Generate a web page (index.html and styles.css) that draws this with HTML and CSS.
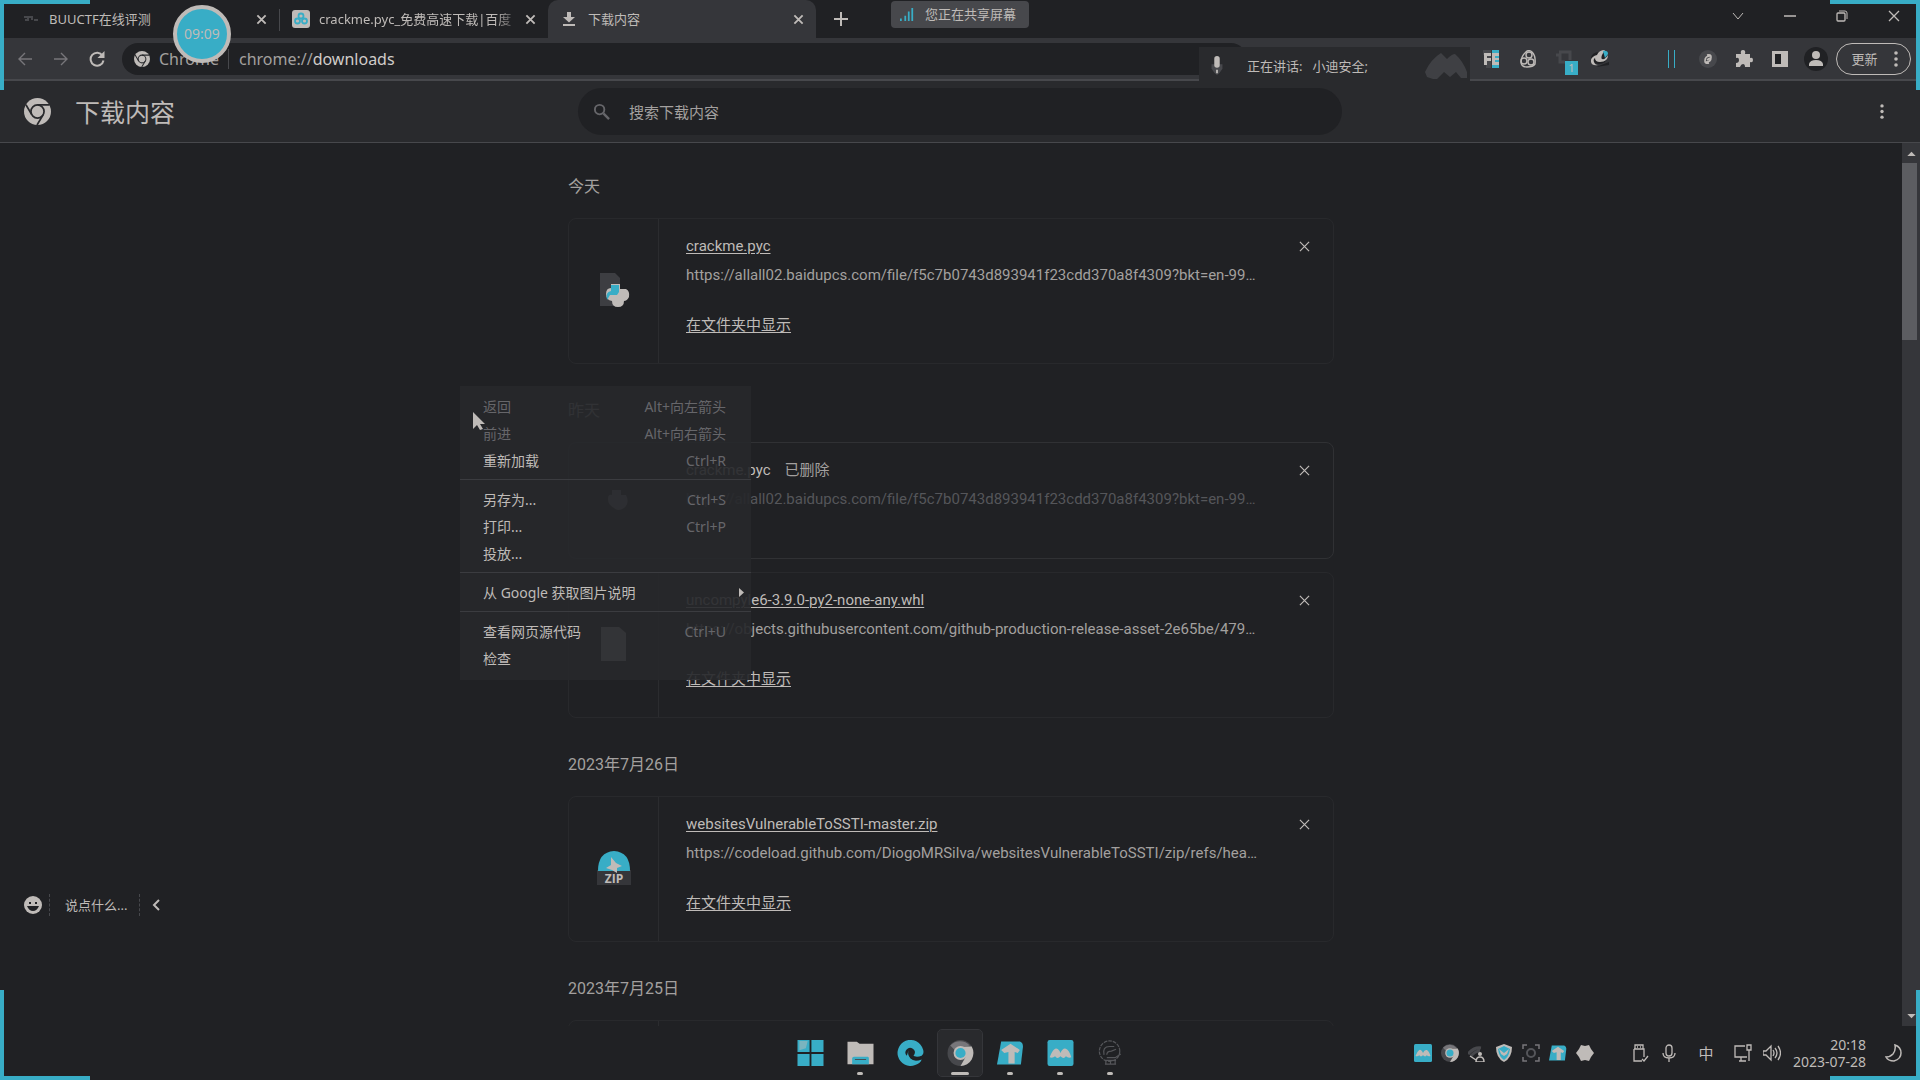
FILE: index.html
```html
<!DOCTYPE html>
<html lang="zh-CN">
<head>
<meta charset="utf-8">
<title>下载内容</title>
<link rel="stylesheet" href="styles.css">
</head>
<body>
<svg class="defs" aria-hidden="true">
  <symbol id="x" viewBox="0 0 12 12"><path d="M1.500 1.500l9 9M10.500 1.500l-9 9" fill="none" stroke="currentColor" stroke-width="2"/></symbol>
  <symbol id="x-thin" viewBox="0 0 12 12"><path d="M1 1l10 10M11 1L1 11" fill="none" stroke="currentColor" stroke-width="1.300"/></symbol>
  <symbol id="chrome" viewBox="0 0 28 28"><circle cx="14" cy="14" r="14" fill="currentColor"/><circle cx="14" cy="14" r="6.800" fill="none" stroke="#292a2d" stroke-width="1.800"/><path d="M14 7.200h12.500M8.200 17.500L2 7M19.800 17.500L13.500 28" stroke="#292a2d" stroke-width="1.800" fill="none"/></symbol>
  <symbol id="chrome-color" viewBox="0 0 28 28"><circle cx="14" cy="14" r="14" fill="#47484c"/><path d="M14 7h12a14 14 0 0 1-12 21l6-10.500z" fill="#bfbbb8"/><path d="M3 6a14 14 0 0 1 21 0l-10 2-6 3z" fill="#77767a"/><circle cx="14" cy="14" r="7.500" fill="#bfbbb8"/><circle cx="14" cy="14" r="5.500" fill="#38adc6"/></symbol>
  <symbol id="peaks" viewBox="0 0 24 24"><rect width="24" height="24" rx="2" fill="#38adc6"/><path d="M2 16q2-6 5-8 2-1 4 2l1 2q2-5 5-4 3 1 5 8-3 1-5-1-2 3-5 0-3 3-5 0-2 2-5 1z" fill="#bfbbb8"/></symbol>
  <symbol id="arrow-app" viewBox="0 0 26 24"><path d="M4 1h18q3 1 3 5l-2 17H0z" fill="#38adc6"/><path d="M4 9l9-6 9 6-2 3-3-1v11h-6V11l-4 1z" fill="#bfbbb8"/></symbol>
  <symbol id="dots" viewBox="0 0 4 16"><circle cx="2" cy="2" r="1.800" fill="currentColor"/><circle cx="2" cy="8" r="1.800" fill="currentColor"/><circle cx="2" cy="14" r="1.800" fill="currentColor"/></symbol>
  <symbol id="download" viewBox="0 0 12 14"><path d="M4 0h4v5h4L6 10.500 0 5h4zM0 12h12v2H0z" fill="currentColor"/></symbol>
</svg>

<div class="tabs" role="tablist">
  <div class="tab tab-first" role="tab">
    <svg class="fav" viewBox="0 0 18 18"><path d="M2 7h4v3H3M7 7h3v3M12 10h4" stroke="#47484c" stroke-width="2" fill="none"/></svg>
    <span class="tab-title">BUUCTF在线评测</span>
    <button class="tab-close" aria-label="关闭"><svg><use href="#x"/></svg></button>
  </div>
  <div class="tab tab-second" role="tab">
    <svg class="fav" viewBox="0 0 18 18"><rect width="18" height="18" rx="3" fill="#bfbbb8"/><g fill="none" stroke="#38adc6" stroke-width="1.800"><circle cx="9" cy="6" r="2.500"/><circle cx="5.500" cy="11" r="2.500"/><circle cx="12.500" cy="11" r="2.500"/></g></svg>
    <span class="tab-title fade">crackme.pyc_免费高速下载|百度</span>
    <button class="tab-close" aria-label="关闭"><svg><use href="#x"/></svg></button>
  </div>
  <div class="tab tab-active" role="tab" aria-selected="true">
    <svg class="fav fav-dl"><use href="#download"/></svg>
    <span class="tab-title">下载内容</span>
    <button class="tab-close" aria-label="关闭"><svg><use href="#x"/></svg></button>
  </div>
  <button class="new-tab" aria-label="新标签页"><svg viewBox="0 0 14 14"><path d="M7 0v14M0 7h14" stroke="currentColor" stroke-width="2"/></svg></button>
  <div class="window-buttons">
    <button aria-label="搜索标签页"><svg viewBox="0 0 12 12"><path d="M1 3l5 6 5-6" fill="none" stroke="currentColor"/></svg></button>
    <button aria-label="最小化"><svg viewBox="0 0 12 12"><path d="M0 6h12" stroke="currentColor" stroke-width="1.500"/></svg></button>
    <button aria-label="还原"><svg viewBox="0 0 12 12"><rect x="1" y="3" width="8" height="8" rx="1" fill="none" stroke="currentColor" stroke-width="1.300"/><path d="M3 1h6q2 0 2 2v6" fill="none" stroke="currentColor"/></svg></button>
    <button aria-label="关闭"><svg><use href="#x-thin"/></svg></button>
  </div>
</div>

<div class="toolbar">
  <button class="nav dim" aria-label="后退"><svg viewBox="0 0 16 16"><path d="M15 8H2M8 2L2 8l6 6" fill="none" stroke="currentColor" stroke-width="1.400"/></svg></button>
  <button class="nav dim" aria-label="前进"><svg viewBox="0 0 16 16"><path d="M1 8h13M8 2l6 6-6 6" fill="none" stroke="currentColor" stroke-width="1.400"/></svg></button>
  <button class="nav" aria-label="重新加载"><svg viewBox="0 0 16 16"><path d="M13.500 4.500A6.500 6.500 0 1 0 14.500 9.500" fill="none" stroke="currentColor" stroke-width="2"/><path d="M15.500 0v7h-7z" fill="currentColor"/></svg></button>
  <div class="omnibox">
    <svg class="omni-logo"><use href="#chrome"/></svg>
    <span class="omni-label">Chrome</span>
    <div class="omni-url" role="textbox" aria-label="地址">chrome://<span>downloads</span></div>
  </div>
  <div class="extensions">
    <button aria-label="FE"><svg viewBox="0 0 18 18"><path d="M0 0h8v18H3V5H0z" fill="#47484c"/><path d="M9 0h7v18H9z" fill="#38adc6"/><path d="M1 3h7v3H4v2h4v3H4v4H1zM9 3h7v3h-4v2h4v2h-4v2h4v3H9z" fill="#bfbbb8"/></svg></button>
    <button aria-label="扩展"><svg viewBox="0 0 18 18"><g fill="none" stroke="#bfbbb8" stroke-width="1.400"><circle cx="10" cy="5" r="3"/><circle cx="5" cy="11" r="3"/><circle cx="12" cy="12" r="3"/><path d="M8 1q-6 5-6 11 0 5 6 5t8-3q1-8-3-12-2-2-5-1z"/></g></svg></button>
    <button class="badged" aria-label="扩展"><svg viewBox="0 0 18 18"><path d="M1 5h4v7h5M4 2h11v8" fill="none" stroke="#47484c" stroke-width="3"/></svg><span class="badge">1</span></button>
    <button aria-label="扩展"><svg viewBox="0 0 18 18"><path d="M5 17l13-5v3z" fill="#202124"/><ellipse cx="8" cy="8" rx="8" ry="6" fill="#202124"/><path d="M0 12q-1-5 6-7 2-5 8-5-5 7-3 9 3 1 6-4 0 7-8 7-5 0-5-4-2 1-1 4 1 3 4 3-6 1-7-3z" fill="#bfbbb8"/><path d="M12 1q5-1 5 3l-3 4z" fill="#38adc6"/></svg></button>
    <button class="blank" aria-label="扩展"></button>
    <button aria-label="扩展"><svg viewBox="0 0 18 18"><path d="M5.500 0v18M11.500 0v18" stroke="#38adc6"/></svg></button>
    <button aria-label="扩展"><svg viewBox="0 0 18 18"><circle cx="9" cy="9" r="9" fill="#47484c"/><g fill="none" stroke="#bfbbb8" stroke-width="1.700"><path d="M10 13q-4 1-4-2 0-5 5-5M8 5q4-1 4 2 0 5-5 5M8 10l3-2"/></g></svg></button>
    <button aria-label="扩展程序"><svg viewBox="0 0 18 18"><path d="M1 4h5q-1-4 2-4t2 4h5v4q3-1 3 2t-3 2v5h-5q0-3-2-3t-3 3H1v-4q3 0 3-3T1 8z" fill="#bfbbb8"/></svg></button>
    <button aria-label="侧边栏"><svg viewBox="0 0 18 18"><rect x="1" y="1" width="16" height="16" fill="#bfbbb8"/><rect x="4" y="4" width="6" height="10" fill="#202124"/></svg></button>
    <button aria-label="用户"><svg class="avatar" viewBox="0 0 24 24"><circle cx="12" cy="12" r="12" fill="#202124"/><circle cx="12" cy="8" r="4" fill="#bfbbb8"/><path d="M5 19v-2q1-4 7-4t7 4v2z" fill="#bfbbb8"/></svg></button>
  </div>
  <button class="update">更新<svg><use href="#dots"/></svg></button>
</div>

<header class="page-header">
  <div class="brand"><svg><use href="#chrome"/></svg><h1>下载内容</h1></div>
  <label class="search">
    <svg viewBox="0 0 18 18"><circle cx="7" cy="7" r="5" fill="none" stroke="currentColor" stroke-width="2"/><path d="M11 11l6 6" stroke="currentColor" stroke-width="2.500"/></svg>
    <input type="search" placeholder="搜索下载内容" aria-label="搜索下载内容">
  </label>
  <div class="header-end"><button aria-label="更多操作"><svg><use href="#dots"/></svg></button></div>
</header>

<div class="viewport">
  <main class="downloads">
    <section>
      <h2>今天</h2>
      <article class="card">
        <div class="thumb"><svg viewBox="0 0 34 34"><path d="M3 0h15l5 5v28H3z" fill="#3d3e42"/><path d="M14 11h9v5h6q4 2 3 8-2 4-5 4 0 6-6 6t-6-6q-6-1-6-7t5-6z" fill="#bfbbb8"/><path d="M14 12h8v7l-2 3h-7l-3 5q-2-8 4-9z" fill="#38adc6"/></svg></div>
        <div class="info">
          <div class="title-row"><a href="#">crackme.pyc</a><button class="remove" aria-label="移除"><svg><use href="#x-thin"/></svg></button></div>
          <p class="url">https://allall02.baidupcs.com/file/f5c7b0743d893941f23cdd370a8f4309?bkt=en-99…</p>
          <a class="show" href="#">在文件夹中显示</a>
        </div>
      </article>
    </section>
    <section>
      <h2>昨天</h2>
      <article class="card removed">
        <div class="thumb"><svg viewBox="0 0 34 34"><path d="M15 7h9v5h5q4 8-2 13-6 4-10 0-6-3-6-9 0-5 4-4z" fill="#77767a"/></svg></div>
        <div class="info">
          <div class="title-row"><span>crackme.pyc</span><span class="state">已删除</span><button class="remove" aria-label="移除"><svg><use href="#x-thin"/></svg></button></div>
          <p class="url">https://allall02.baidupcs.com/file/f5c7b0743d893941f23cdd370a8f4309?bkt=en-99…</p>
        </div>
      </article>
      <article class="card">
        <div class="thumb"><svg viewBox="0 0 34 34"><path d="M4 0h18l7 6v28H4z" fill="#bfbbb8"/></svg></div>
        <div class="info">
          <div class="title-row"><a href="#">uncompyle6-3.9.0-py2-none-any.whl</a><button class="remove" aria-label="移除"><svg><use href="#x-thin"/></svg></button></div>
          <p class="url">https://objects.githubusercontent.com/github-production-release-asset-2e65be/479…</p>
          <a class="show" href="#">在文件夹中显示</a>
        </div>
      </article>
    </section>
    <section>
      <h2>2023年7月26日</h2>
      <article class="card">
        <div class="thumb"><svg viewBox="0 0 34 34"><rect y="19" width="34" height="15" fill="#35363a"/><path d="M1 20Q1 1 17 0q16 1 16 20z" fill="#38adc6"/><path d="M14 6l5 6 6 3-5 2v5l-5-3-6-2 5-3z" fill="#bfbbb8"/><text x="17" y="32" class="zip">ZIP</text></svg></div>
        <div class="info">
          <div class="title-row"><a href="#">websitesVulnerableToSSTI-master.zip</a><button class="remove" aria-label="移除"><svg><use href="#x-thin"/></svg></button></div>
          <p class="url">https://codeload.github.com/DiogoMRSilva/websitesVulnerableToSSTI/zip/refs/hea…</p>
          <a class="show" href="#">在文件夹中显示</a>
        </div>
      </article>
    </section>
    <section>
      <h2>2023年7月25日</h2>
      <article class="card"><div class="thumb"></div><div class="info"></div></article>
    </section>
  </main>
  <div class="scrollbar">
    <button aria-label="向上滚动"><svg viewBox="0 0 10 6"><path d="M0 6l5-5 5 5z" fill="currentColor"/></svg></button>
    <div class="thumb-bar"></div>
    <button class="down" aria-label="向下滚动"><svg viewBox="0 0 10 6"><path d="M0 0l5 5 5-5z" fill="currentColor"/></svg></button>
  </div>
</div>

<footer class="taskbar">
  <div class="apps">
    <button aria-label="开始"><svg viewBox="0 0 28 28"><path d="M0 0h13v13H0zM15 0h13v13H15zM0 15h13v13H0zM15 15h13v13H15z" fill="#38adc6"/><path d="M2 1h9l-2 8-7 2z" fill="#7ab4bf"/></svg></button>
    <button class="running" aria-label="文件资源管理器"><svg viewBox="0 0 28 28"><path d="M0 2h10l3 2h15v22H0z" fill="#bfbbb8"/><path d="M7 18h15q1 0 1 2v6H5v-6q0-2 2-2z" fill="#38adc6"/><path d="M8 21h12" stroke="#47484c"/></svg></button>
    <button aria-label="Edge"><svg viewBox="0 0 28 28"><path d="M28 13A14 14 0 1 0 19 27q6-2 7-6-8 3-12-1-2-3 0-5 5 5 12 2 2-1 2-4z" fill="#38adc6"/><path d="M10 17a5 5 0 1 1 8-1q-2 2 2 3h5q-6 4-10 1-5-3-3-9z" fill="#202124"/></svg></button>
    <button class="running current" aria-label="Chrome"><svg><use href="#chrome-color"/></svg></button>
    <button class="running" aria-label="应用"><svg><use href="#arrow-app"/></svg></button>
    <button class="running" aria-label="会议"><svg><use href="#peaks"/></svg></button>
    <button class="running" aria-label="工具"><svg viewBox="0 0 28 28"><g fill="none" stroke="#55565a" stroke-width="1.300"><circle cx="13" cy="12" r="11" stroke-dasharray="4 1"/><path d="M7 16q-2-9 6-9h5M10 16q0-4 5-4l5-2M10 19h9l6-4M8 22h12M8 26h12M9 22v4M14 22v4M19 22v4"/></g></svg></button>
  </div>
  <div class="tray">
    <svg><use href="#peaks"/></svg>
    <svg><use href="#chrome-color"/></svg>
    <svg viewBox="0 0 18 18"><path d="M0 10q6-7 13-6M3 12q4-5 9-5" fill="none" stroke="#47484c" stroke-width="3"/><circle cx="12" cy="10" r="2" fill="#bfbbb8"/><path d="M8 18q0-5 4-5t4 5zM2 12l6 4" fill="none" stroke="#bfbbb8" stroke-width="1.500"/></svg>
    <svg viewBox="0 0 18 18"><path d="M9 0l8 3q0 11-8 15Q1 14 1 3z" fill="#bfbbb8"/><path d="M9 2l6 3q-1 8-6 11Q4 13 3 5z" fill="#38adc6"/><path d="M4 5l5 4 5-4-2 5-3 2-3-2z" fill="#bfbbb8"/></svg>
    <svg viewBox="0 0 18 18"><path d="M1 5V1h4M13 1h4v4M1 13v4h4M13 17h4v-4" fill="none" stroke="#77767a" stroke-width="1.500"/><circle cx="9" cy="9" r="4" fill="none" stroke="#55565a" stroke-width="2"/></svg>
    <svg><use href="#arrow-app"/></svg>
    <svg viewBox="0 0 18 18"><path d="M5 1l4 1 4-1 2 4 3 4-3 4-2 4-4-1-4 1-2-4-3-4 3-4z" fill="#bfbbb8"/></svg>
  </div>
  <div class="system">
    <button aria-label="USB"><svg viewBox="0 0 18 18"><path d="M4 5V1h8v4M3 5h10v8M3 5v12h8M6 3h1M9 3h1M11 15l2 2 4-5" fill="none" stroke="currentColor" stroke-width="1.300"/></svg></button>
    <button aria-label="麦克风"><svg viewBox="0 0 18 18"><rect x="6" y="1" width="6" height="11" rx="3" fill="none" stroke="currentColor" stroke-width="1.300"/><path d="M3 9q0 5 6 5t6-5M9 14v4" fill="none" stroke="currentColor" stroke-width="1.300"/></svg></button>
    <button class="ime" aria-label="输入法">中</button>
    <button aria-label="网络"><svg viewBox="0 0 18 18"><path d="M11 2H1v11h12M5 17h7M7 13v4M13 1h4v5h-4zM15 6v11" fill="none" stroke="currentColor" stroke-width="1.300"/></svg></button>
    <button aria-label="音量"><svg viewBox="0 0 18 18"><path d="M0 7h3l5-5v14l-5-5H0zM10 6q2 3 0 6M12 4q4 5 0 10M15 2q5 7 0 14" fill="none" stroke="currentColor" stroke-width="1.300"/></svg></button>
  </div>
  <button class="clock"><span>20:18</span><span>2023-07-28</span></button>
  <button class="moon" aria-label="通知"><svg viewBox="0 0 18 18"><path d="M11 1q6 2 6 8t-7 8q-6 0-8-4 4 0 7-3 3-4 2-9z" fill="none" stroke="currentColor" stroke-width="1.500"/></svg></button>
</footer>

<div class="menu" role="menu">
  <button disabled><span>返回</span><kbd>Alt+向左箭头</kbd></button>
  <button disabled><span>前进</span><kbd>Alt+向右箭头</kbd></button>
  <button><span>重新加载</span><kbd>Ctrl+R</kbd></button>
  <hr>
  <button><span>另存为...</span><kbd>Ctrl+S</kbd></button>
  <button><span>打印...</span><kbd>Ctrl+P</kbd></button>
  <button><span>投放...</span></button>
  <hr>
  <button class="submenu"><span>从 Google 获取图片说明</span><svg viewBox="0 0 5 9"><path d="M0 0l5 4.500L0 9z" fill="currentColor"/></svg></button>
  <hr>
  <button><span>查看网页源代码</span><kbd>Ctrl+U</kbd></button>
  <button><span>检查</span></button>
</div>
<svg class="cursor" viewBox="0 0 12 18"><path d="M0 0l12 12H7l3 5-3 1-3-5-4 4z" fill="#bfbbb8"/></svg>

<div class="sharing"><svg viewBox="0 0 16 16"><path d="M1 13v3M6 10v6M10 5v11M14 1v15" stroke="#38adc6" stroke-width="2"/></svg>您正在共享屏幕</div>
<div class="timer">09:09</div>
<div class="speaking">
  <svg class="mic" viewBox="0 0 12 22"><path d="M0 9h12v5q-3 5-6 7-3-2-6-7z" fill="#47484c"/><rect x="3" width="6" height="13" rx="3" fill="#bfbbb8"/><path d="M6 15v4" stroke="#bfbbb8" stroke-width="2"/></svg>
  <span>正在讲话:</span><span>小迪安全;</span>
  <svg class="peaks-dim" viewBox="0 0 42 26"><path d="M0 19Q6 6 16 0l6 6q5-5 8-5 8 7 12 18v6h-6l-5-6-6 5-6-5-8 8-9-3z" fill="#3f4044"/></svg>
</div>
<div class="chat">
  <button aria-label="表情"><svg viewBox="0 0 18 18"><circle cx="9" cy="9" r="9" fill="#bfbbb8"/><path d="M5 6h2v2H5zM11 6h2v2h-2zM3 10h12q-2 5-6 5t-6-5z" fill="#202124"/></svg></button>
  <input type="text" placeholder="说点什么..." aria-label="说点什么">
  <button class="fold" aria-label="收起"><svg viewBox="0 0 8 12"><path d="M7 1L2 6l5 5" fill="none" stroke="currentColor" stroke-width="2"/></svg></button>
</div>
<i class="corner tl"></i><i class="corner tr"></i><i class="corner bl"></i><i class="corner br"></i>
</body>
</html>
```
FILE: styles.css
```css
:root {
  --bg: #202124;
  --panel: #292a2d;
  --bar: #35363a;
  --line: #47484c;
  --text: #bfbbb8;
  --muted: #a3a09f;
  --accent: #38adc6;
  --ui: "Noto Sans", "Noto Sans CJK SC", sans-serif;
}
* { box-sizing: border-box; }
body {
  margin: 0;
  height: 100vh;
  display: flex;
  flex-direction: column;
  position: relative;
  overflow: hidden;
  background: var(--bg);
  color: var(--text);
  font: 13px/20px var(--ui);
}
button {
  padding: 0;
  border: 0;
  background: none;
  color: inherit;
  font: inherit;
  display: flex;
  align-items: center;
  justify-content: center;
}
svg { display: block; flex: none; }
input { border: 0; padding: 0; background: none; color: inherit; font: inherit; outline: 0; }
input::placeholder { color: inherit; opacity: 1; }
.defs { position: absolute; width: 0; height: 0; }

/* Tab strip */
.tabs { flex: none; display: flex; height: 38px; }
.tab { display: flex; align-items: center; padding-right: 8px; }
.tab-first { width: 280px; padding-left: 22px; border-right: 1px solid var(--line); border-image: linear-gradient(transparent 25%, var(--line) 25%, var(--line) 80%, transparent 80%) 1; }
.tab-second { width: 268px; padding-left: 12px; }
.tab-active { width: 268px; padding-left: 15px; background: var(--bar); border-radius: 10px 10px 0 0; }
.fav { width: 18px; height: 18px; margin-right: 9px; }
.fav-dl { width: 12px; height: 14px; margin-right: 13px; }
.tab-title { flex: 1; white-space: nowrap; overflow: hidden; }
.fade { mask-image: linear-gradient(90deg, #000 88%, transparent); }
.tab-close { width: 20px; height: 20px; }
.tab-close svg { width: 11px; height: 11px; }
.new-tab { width: 50px; }
.new-tab svg { width: 14px; height: 14px; }
.window-buttons { display: flex; margin-left: auto; height: 32px; }
.window-buttons button { width: 52px; }
.window-buttons svg { width: 12px; height: 12px; }

/* Toolbar */
.toolbar {
  flex: none;
  display: flex;
  align-items: center;
  height: 43px;
  padding: 0 9px 0 7px;
  background: var(--bar);
  border-bottom: 2px solid var(--line);
}
.nav { width: 36px; height: 32px; }
.nav svg { width: 16px; height: 16px; }
.dim { color: #77767a; }
.omnibox {
  flex: 1;
  display: flex;
  align-items: center;
  height: 32px;
  margin: 0 227px 0 7px;
  padding-left: 12px;
  border-radius: 16px;
  background: var(--bg);
  font-size: 16px;
}
.omni-logo { width: 16px; height: 16px; }
.omni-label { margin: 0 9px; color: var(--muted); }
.omni-url { padding-left: 10px; border-left: 1px solid var(--line); color: var(--muted); }
.omni-url span { color: #d0ccc9; }
.extensions { display: flex; }
.extensions button { width: 36px; height: 32px; position: relative; }
.extensions svg { width: 18px; height: 18px; }
.extensions .avatar { width: 24px; height: 24px; }
.badge { position: absolute; right: 4px; bottom: 0; width: 13px; height: 14px; background: var(--accent); color: var(--text); font-size: 11px; line-height: 14px; }
.update { width: 75px; height: 32px; margin-left: 2px; gap: 16px; padding-left: 2px; border: 1px solid var(--text); border-radius: 16px; }
.update svg { width: 4px; height: 16px; }

/* Downloads page header */
.page-header {
  flex: none;
  display: grid;
  grid-template-columns: 1fr minmax(0, 764px) 1fr;
  align-items: center;
  height: 62px;
  background: var(--panel);
  border-bottom: 1px solid var(--line);
}
.brand { display: flex; align-items: center; gap: 24px; padding-left: 24px; }
.brand svg { width: 27px; height: 27px; }
h1 { margin: 0; font-size: 25px; line-height: 32px; font-weight: 400; }
.search { display: flex; align-items: center; gap: 19px; height: 47px; padding: 0 15px; border-radius: 24px; background: var(--bg); color: var(--muted); font-size: 15px; }
.search svg { width: 17px; height: 17px; color: #66666a; }
.search input { flex: 1; }
.header-end { display: flex; justify-content: flex-end; padding-right: 26px; }
.header-end button { width: 24px; height: 24px; }
.header-end svg { width: 4px; height: 15px; }

/* Download list */
.viewport { flex: 1; min-height: 0; display: flex; overflow: hidden; }
.downloads { flex: 1; padding: 0 16px; font-family: Roboto, "Noto Sans CJK SC", sans-serif; font-size: 15px; overflow: hidden; }
section { max-width: 766px; margin: 0 auto 3px; }
h2 { margin: 0; padding: 34px 0 21px; color: var(--muted); font-size: 16px; line-height: 20px; font-weight: 400; }
.card { display: flex; min-height: 145px; border: 1px solid #28292c; border-radius: 8px; }
.card + .card { margin-top: 13px; }
.thumb { width: 90px; display: flex; align-items: center; justify-content: center; padding-bottom: 2px; border-right: 1px solid #2b2c2f; }
.thumb svg { width: 34px; height: 34px; }
.info { flex: 1; min-width: 0; padding: 17px 19px 28px 27px; }
.title-row { display: flex; align-items: center; height: 20px; }
.title-row a, .show { color: inherit; text-underline-offset: 2px; text-decoration-thickness: 1px; }
.state { margin-left: 14px; color: var(--muted); }
.remove { width: 20px; height: 20px; margin-left: auto; }
.remove svg { width: 11px; height: 11px; }
.url { margin: 9px 0 0; white-space: nowrap; color: var(--muted); }
.show { display: block; width: max-content; margin-top: 30px; }
.removed { min-height: 117px; border-color: #303134; }
.removed .url { color: #55565a; }
.removed .thumb { border-color: transparent; }
.zip { font: 700 12px "Open Sans", sans-serif; fill: var(--text); text-anchor: middle; }

.scrollbar { width: 18px; display: flex; flex-direction: column; background: var(--bar); }
.scrollbar button { height: 20px; }
.scrollbar svg { width: 9px; height: 5px; }
.thumb-bar { height: 20%; background: #5c5d61; margin-right: 3px; }
.scrollbar .down { margin-top: auto; }

/* Windows taskbar */
.taskbar { flex: none; display: grid; grid-template-columns: 1fr auto auto auto 54px; align-items: center; height: 54px; position: relative; }
.apps { position: absolute; inset: 0; display: flex; align-items: center; justify-content: center; gap: 6px; pointer-events: none; }
.apps button { position: relative; width: 44px; height: 46px; border-radius: 4px; }
.apps svg { width: 27px; height: 26px; }
.current { background: var(--panel); outline: 1px solid var(--bar); }
.running::after { content: ""; position: absolute; bottom: 1px; width: 6px; height: 3px; border-radius: 2px; background: var(--text); }
.current::after { width: 18px; }
.tray { grid-column: 2; display: flex; gap: 9px; margin-right: 37px; }
.tray svg { width: 18px; height: 18px; }
.system { grid-column: 3; display: flex; gap: 11px; margin-right: 12px; }
.system svg, .moon svg { width: 18px; height: 18px; }
.ime { width: 34px; font-size: 15px; }
.clock { grid-column: 4; flex-direction: column; align-items: flex-end; font-size: 14px; line-height: 17px; }

/* Context menu */
.menu { position: absolute; left: 460px; top: 386px; width: 291px; padding: 7px 0 8px; background: rgba(39, 40, 43, 0.92); font-size: 14px; line-height: 27px; }
.menu button { width: 100%; height: 27px; padding: 0 25px 0 23px; justify-content: space-between; }
.menu button:disabled { color: #66666a; }
.menu kbd { font: inherit; color: #66666a; }
.menu hr { height: 1px; margin: 5px 0 6px; border: 0; background: #3b3c40; }
.menu .submenu { padding-right: 7px; }
.submenu svg { width: 5px; height: 9px; }
.cursor { position: absolute; left: 473px; top: 412px; width: 12px; height: 18px; }

/* Screen-sharing overlays */
.sharing { position: absolute; left: 891px; top: 1px; display: flex; align-items: center; gap: 10px; width: 138px; height: 27px; padding: 0 0 2px 8px; border-radius: 4px; background: var(--line); white-space: nowrap; }
.sharing svg { width: 16px; height: 14px; }
.timer { position: absolute; left: 173px; top: 5px; width: 58px; height: 58px; border: 4px solid var(--text); border-radius: 50%; background: var(--accent); text-align: center; font-size: 14px; line-height: 50px; }
.speaking { position: absolute; left: 1199px; top: 47px; display: flex; align-items: center; gap: 10px; width: 271px; height: 38px; padding: 0 3px 0 12px; background: var(--panel); white-space: nowrap; }
.mic { width: 12px; height: 20px; margin-right: 14px; }
.peaks-dim { width: 42px; height: 26px; margin-left: auto; }
.chat { position: absolute; left: 24px; bottom: 164px; display: flex; align-items: center; height: 22px; }
.chat > button svg { width: 18px; height: 18px; }
.chat input { width: 91px; height: 22px; margin-left: 7px; padding-left: 15px; border: 1px dashed var(--line); border-width: 0 1px; }
.chat .fold { margin-left: 12px; }
.chat .fold svg { width: 8px; height: 12px; }
.corner { position: absolute; width: 90px; height: 90px; border: 0 solid var(--accent); pointer-events: none; }
.tl { left: 0; top: 0; border-width: 4px 0 0 4px; }
.tr { right: 0; top: 0; border-width: 4px 4px 0 0; }
.bl { left: 0; bottom: 0; border-width: 0 0 4px 4px; }
.br { right: 0; bottom: 0; border-width: 0 4px 4px 0; }
```
